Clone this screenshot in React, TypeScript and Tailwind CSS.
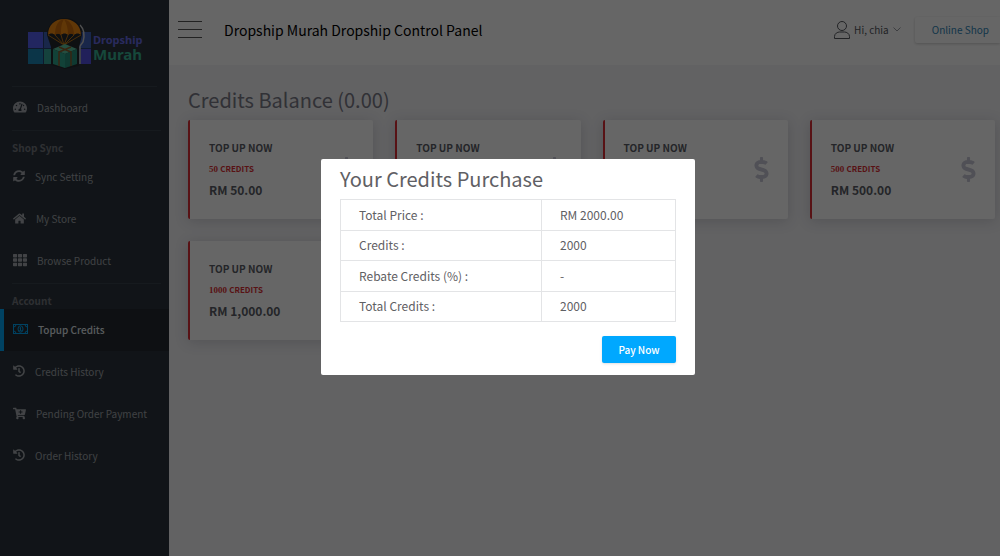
import { useState } from 'react';
import type { ReactNode } from 'react';
import { FaCartPlus, FaDollarSign, FaHistory, FaHome, FaSyncAlt, FaTachometerAlt, FaTh } from 'react-icons/fa';

interface NavEntry {
  label: string;
  icon: ReactNode;
  active?: boolean;
}

interface Package {
  credits: string;
  price: string;
}

const packages: Package[] = [
  { credits: '50', price: '50.00' },
  { credits: '100', price: '100.00' },
  { credits: '200', price: '200.00' },
  { credits: '500', price: '500.00' },
  { credits: '1000', price: '1,000.00' },
];

const purchase = [
  { label: 'Total Price :', value: 'RM 2000.00' },
  { label: 'Credits :', value: '2000' },
  { label: 'Rebate Credits (%) :', value: '-' },
  { label: 'Total Credits :', value: '2000' },
];

function MoneyIcon() {
  return (
    <svg viewBox="0 0 30 20" className="h-[10px] w-[15px]" fill="none" stroke="currentColor">
      <rect x="1" y="1" width="28" height="18" strokeWidth="2" />
      <path d="M1 6a5 5 0 0 0 5-5M24 1a5 5 0 0 0 5 5M29 14a5 5 0 0 0-5 5M6 19a5 5 0 0 0-5-5" strokeWidth="2" />
      <ellipse cx="15" cy="10" rx="5" ry="6.5" strokeWidth="2" />
      <path d="M13 8l2-1.500V13M12.500 13.500h5" strokeWidth="2" />
    </svg>
  );
}

const shopLinks: NavEntry[] = [
  { label: 'Sync Setting', icon: <FaSyncAlt className="size-3" /> },
  { label: 'My Store', icon: <FaHome className="size-[13px]" /> },
  { label: 'Browse Product', icon: <FaTh className="size-[14px]" /> },
];

const accountLinks: NavEntry[] = [
  { label: 'Topup Credits', icon: <MoneyIcon />, active: true },
  { label: 'Credits History', icon: <FaHistory className="size-3" /> },
  { label: 'Pending Order Payment', icon: <FaCartPlus className="size-[13px]" /> },
  { label: 'Order History', icon: <FaHistory className="size-3" /> },
];

function Logo() {
  return (
    <div className="flex h-[86px] items-center pl-[27px]">
      <svg viewBox="0 0 64 52" className="h-[52px] w-[64px]">
        <rect x="1" y="15" width="63" height="32" fill="#27406e" />
        <rect x="1" y="15" width="15" height="16" fill="#5560f0" />
        <rect x="17" y="15" width="47" height="16" fill="#3f62b8" />
        <rect x="1" y="32" width="15" height="15" fill="#1d86b4" />
        <rect x="17" y="32" width="7" height="15" fill="#35a59a" />
        <rect x="54" y="32" width="10" height="15" fill="#5450e0" />
        <path d="M53 8c4 4 5 10 3 17l-3 4v18" fill="none" stroke="#c8c8c8" strokeWidth="1.5" />
        <path d="M20 18C20 7 28 1 38 1s17 6 17 17l-3 12v19l-14 3-14-4V30z" fill="#25282e" />
        <path d="M21 18C21 8 28 2 37 2s17 6 17 16c-2-2-5-2-7 0-2-2-4-2-6 0-2-2-5-2-7 0-2-2-4-2-6 0-2-2-5-2-7 0z" fill="#f08a12" />
        <path d="M28 18C28 9 31 3 37 2c-3 5-3 10-3 16-2-2-4-2-6 0zM47 18C47 9 43 4 37 2c3 5 4 10 4 16 2-2 4-2 6 0z" fill="#cc6c0a" />
        <path d="M21 18l16 10 17-10M28 18l9 10 10-10M34 18l3 10 4-10" fill="none" stroke="#b87318" strokeWidth="1" />
        <path d="M26 32l12-5 12 5-12 5z" fill="#5cc4a0" />
        <path d="M26 32l12 5v14l-12-4z" fill="#2fa58c" />
        <path d="M50 32l-12 5v14l12-4z" fill="#268f7c" />
        <path d="M32 30l12 5v14M44 30l-12 5v14" fill="none" stroke="#8a5a2c" strokeWidth="1.5" />
      </svg>
      <div className="pt-[9px] pl-[2px] font-['Noto_Sans',sans-serif] font-bold">
        <p className="text-[11px] leading-[13px] text-[#686ae8]">Dropship</p>
        <p className="text-[15px] leading-4 text-[#37b595]">Murah</p>
      </div>
    </div>
  );
}

function NavLink({ label, icon, active }: NavEntry) {
  return (
    <a
      href="#"
      className={
        active
          ? 'flex h-[42px] items-center gap-[10px] border-l-4 border-[#00a6f5] bg-[#242a30] pb-[2px] pl-[9px] text-[10px] font-medium text-[#dfe3e8]'
          : 'flex h-[42px] items-center gap-[10px] pb-[2px] pl-[13px] text-[10px] text-[#a0a4aa]'
      }
    >
      <span className={active ? 'text-[#00a6f5]' : 'text-[#a5a9ae]'}>{icon}</span>
      {label}
    </a>
  );
}

function NavSection({ title, links }: { title: string; links: NavEntry[] }) {
  return (
    <section>
      <hr className="mt-px mr-2 ml-3 border-[#39424b]" />
      <h2 className="h-[25px] pt-[9px] pl-3 text-[10px] leading-4 font-bold text-[#73777d]">{title}</h2>
      {links.map((link) => (
        <NavLink key={link.label} {...link} />
      ))}
    </section>
  );
}

function PackageCard({ credits, price }: Package) {
  return (
    <button
      type="button"
      className="flex h-[99px] items-center justify-between rounded-xs border-l-2 border-[#dc2f35] bg-white pr-[14px] pl-[19px] text-left text-[#5a5c66] shadow-[0_2px_14px_rgba(58,59,80,0.2)]"
    >
      <span className="flex flex-col">
        <span className="text-[10px] leading-4 font-bold">TOP UP NOW</span>
        <span className="pt-[6px] font-['Liberation_Serif',serif] text-[9px] leading-[14px] font-bold text-[#dc2f35]">
          {credits} <span className="font-['Noto_Sans_CJK_SC',sans-serif] text-[8px]">CREDITS</span>
        </span>
        <span className="pt-[4px] text-xs leading-5 font-bold">RM {price}</span>
      </span>
      <FaDollarSign className="size-[25px] text-[#c8c8d6]" />
    </button>
  );
}

function PurchaseDialog({ onPay }: { onPay: () => void }) {
  return (
    <div className="fixed inset-0 flex items-start justify-center bg-black/60 pt-[159px] pl-4">
      <div role="dialog" aria-labelledby="purchase-title" className="w-[374px] rounded-xs bg-white px-[19px] pb-3 text-[#5f6064]">
        <h2 id="purchase-title" className="pt-[5px] pb-[5px] text-xl leading-[30px]">
          Your Credits Purchase
        </h2>
        <table className="h-[123px] w-full border-collapse text-xs">
          <tbody>
            {purchase.map((row) => (
              <tr key={row.label}>
                <th scope="row" className="w-3/5 border border-[#e3e4e6] pl-[18px] text-left font-normal">
                  {row.label}
                </th>
                <td className="border border-[#e3e4e6] pl-[18px]">{row.value}</td>
              </tr>
            ))}
          </tbody>
        </table>
        <div className="flex justify-end pt-[14px]">
          <button type="button" onClick={onPay} className="h-[27px] w-[74px] rounded-xs bg-[#00a8ff] text-[10px] font-medium text-white shadow-sm">
            Pay Now
          </button>
        </div>
      </div>
    </div>
  );
}

export default function App() {
  const [open, setOpen] = useState(true);

  return (
    <div className="flex min-h-screen bg-[#f4f4f7] font-['Noto_Sans_CJK_SC',sans-serif]">
      <aside className="w-[169px] shrink-0 bg-[#2b343d]">
        <Logo />
        <nav>
          <hr className="mr-3 ml-3 border-[#39424b]" />
          <NavLink label="Dashboard" icon={<FaTachometerAlt className="size-[14px]" />} />
          <NavSection title="Shop Sync" links={shopLinks} />
          <NavSection title="Account" links={accountLinks} />
        </nav>
      </aside>

      <div className="min-w-0 flex-1">
        <header className="flex h-[65px] items-center bg-white pb-[6px] pl-[9px]">
          <button type="button" aria-label="Toggle menu" className="flex w-6 flex-col gap-[7px]">
            <span className="h-px w-full bg-[#555]" />
            <span className="h-px w-full bg-[#555]" />
            <span className="h-px w-full bg-[#555]" />
          </button>
          <h1 className="flex-1 pl-[22px] text-sm text-black">Dropship Murah Dropship Control Panel</h1>
          <button type="button" className="flex items-center gap-1 text-[10px] text-[#55585e]">
            <svg viewBox="0 0 16 18" className="h-[18px] w-4" fill="none" stroke="currentColor">
              <circle cx="8" cy="5" r="4.500" />
              <path d="M.5 17.500v-2c0-3 3-4.500 5-4.500h5c2 0 5 1.500 5 4.500v2z" />
            </svg>
            Hi, chia
            <svg viewBox="0 0 8 5" className="h-[5px] w-2" fill="none" stroke="#9a9ca2">
              <path d="M.5.5L4 4 7.500.5" />
            </svg>
          </button>
          <a href="#" className="ml-[14px] flex h-[26px] items-center rounded-l-xs bg-white pr-[11px] pl-[17px] text-[10px] text-[#2f86b8] shadow-[0_1px_3px_rgba(0,0,0,0.2)]">
            Online Shop
          </a>
        </header>

        <main className="pt-5 pr-[5px] pb-6 pl-[19px]">
          <h2 className="pb-[5px] text-xl leading-[30px] text-[#7a7b88]">Credits Balance (0.00)</h2>
          <div className="grid grid-cols-4 gap-[22px]">
            {packages.map((item) => (
              <PackageCard key={item.credits} {...item} />
            ))}
          </div>
        </main>
      </div>

      {open && <PurchaseDialog onPay={() => setOpen(false)} />}
    </div>
  );
}
